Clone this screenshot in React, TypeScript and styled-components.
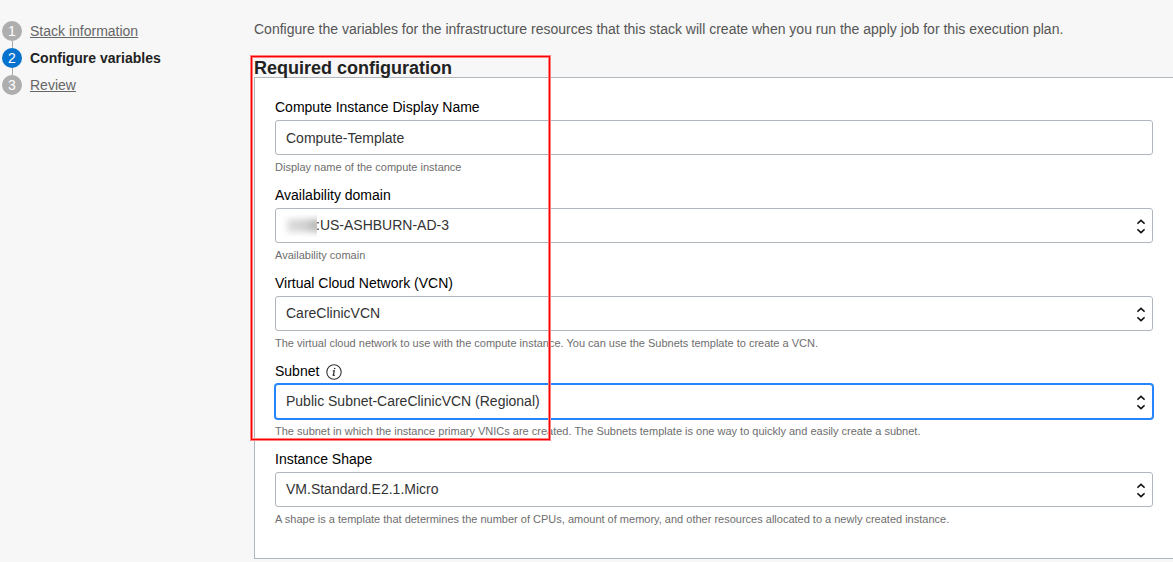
import React from "react";
import styled, { createGlobalStyle, css } from "styled-components";

const GlobalStyle = createGlobalStyle`
  *, *::before, *::after { box-sizing: border-box; }
  body {
    margin: 0;
    min-height: 100vh;
    background: #f7f7f7;
    color: #222;
    font-family: "Liberation Sans", Arial, sans-serif;
    font-size: 14px;
    line-height: 20px;
  }
`;

const Page = styled.div`
  display: flex;
  align-items: flex-start;
  min-height: 100vh;
  overflow: hidden;
`;

const Sidebar = styled.nav`
  flex: 0 0 254px;
  padding: 21px 0 0 2px;
`;

const StepList = styled.ol`
  display: flex;
  flex-direction: column;
  gap: 7px;
  margin: 0;
  padding: 0;
  list-style: none;
`;

const Step = styled.li`
  position: relative;
  display: flex;
  align-items: center;
  gap: 8px;
  height: 20px;

  &:not(:last-child)::after {
    content: "";
    position: absolute;
    left: 10px;
    top: 20px;
    width: 1px;
    height: 7px;
    background: #aaa;
  }
`;

const StepNumber = styled.span<{ $current?: boolean }>`
  width: 20px;
  height: 20px;
  border-radius: 50%;
  background: ${(p) => (p.$current ? "#0572ce" : "#aeaeae")};
  color: #fff;
  text-align: center;
`;

const StepLink = styled.a`
  color: #666;
  text-decoration: underline;
`;

const StepCurrent = styled.strong`
  color: #222;
`;

const Main = styled.main`
  flex: 1;
  min-width: 0;
  padding-top: 19px;
`;

const Intro = styled.p`
  margin: 0 0 19px;
  color: #555;
`;

const Section = styled.section`
  position: relative;
`;

const SectionTitle = styled.h2`
  margin: 0;
  height: 19px;
  font-size: 18px;
  line-height: 20px;
`;

const Panel = styled.div`
  padding: 16px 20px 24px;
  border: 1px solid #b0b6be;
  border-right: 0;
  background: #fff;
`;

const Field = styled.div`
  display: flex;
  flex-direction: column;
  padding-bottom: 3px;
`;

const LabelRow = styled.div`
  display: flex;
  align-items: center;
  gap: 7px;
  height: 26px;
  color: #000;
`;

const InfoButton = styled.button`
  display: flex;
  padding: 0;
  border: 0;
  background: none;
  color: #333;
`;

const Control = styled.div`
  position: relative;
  display: flex;
`;

const box = css<{ $focused?: boolean }>`
  flex: 1;
  min-width: 0;
  height: 35px;
  border: 1px solid ${(p) => (p.$focused ? "#2684ff" : "#b0b6be")};
  border-radius: 3px;
  box-shadow: ${(p) => (p.$focused ? "0 0 0 1px #2684ff" : "none")};
  outline: none;
  background: #fff;
  color: #333;
  font: inherit;
`;

const TextInput = styled.input`
  ${box}
  padding: 0 10px;
`;

const Select = styled.select<{ $focused?: boolean; $redacted?: boolean }>`
  ${box}
  appearance: none;
  padding: 0 24px 2px ${(p) => (p.$redacted ? "40px" : "10px")};
`;

const Redaction = styled.span`
  position: absolute;
  left: 6px;
  top: 6px;
  width: 36px;
  height: 23px;
  overflow: hidden;
  pointer-events: none;

  &::before {
    content: "";
    position: absolute;
    inset: 5px -4px 5px 6px;
    background: linear-gradient(90deg, #ddd, #d2d2d2 50%, #b0b0b0);
    filter: blur(3px);
  }
`;

const Chevrons = styled.svg`
  position: absolute;
  right: 8px;
  top: 10px;
  pointer-events: none;
`;

const Hint = styled.span`
  color: #6e6e6e;
  font-size: 11px;
  line-height: 24px;
  white-space: nowrap;
`;

const Highlight = styled.div`
  position: absolute;
  left: -4px;
  top: -3px;
  width: 301px;
  height: 386px;
  border: 1px solid #ff8080;
  outline: 1px solid #ff8080;
  outline-offset: -3px;
  box-shadow: inset 0 0 0 1px #f00;
  pointer-events: none;
`;

type FieldData = {
  id: string;
  label: string;
  value: string;
  hint: string;
  kind?: "text";
  info?: boolean;
  focused?: boolean;
  redacted?: boolean;
};

const fields: FieldData[] = [
  {
    id: "name",
    label: "Compute Instance Display Name",
    value: "Compute-Template",
    hint: "Display name of the compute instance",
    kind: "text",
  },
  {
    id: "domain",
    label: "Availability domain",
    value: ":US-ASHBURN-AD-3",
    hint: "Availability comain",
    redacted: true,
  },
  {
    id: "vcn",
    label: "Virtual Cloud Network (VCN)",
    value: "CareClinicVCN",
    hint: "The virtual cloud network to use with the compute instance. You can use the Subnets template to create a VCN.",
  },
  {
    id: "subnet",
    label: "Subnet",
    value: "Public Subnet-CareClinicVCN (Regional)",
    hint: "The subnet in which the instance primary VNICs are created. The Subnets template is one way to quickly and easily create a subnet.",
    info: true,
    focused: true,
  },
  {
    id: "shape",
    label: "Instance Shape",
    value: "VM.Standard.E2.1.Micro",
    hint: "A shape is a template that determines the number of CPUs, amount of memory, and other resources allocated to a newly created instance.",
  },
];

function InfoIcon() {
  return (
    <svg width="16" height="18" viewBox="0 -2 16 18" fill="none" stroke="currentColor">
      <circle cx="8" cy="8" r="7.2" strokeWidth="1.1" />
      <path d="M6.8 6.8h1.6l-1.2 4.4q0 .6 1.6-.3" strokeWidth="1.2" />
      <circle cx="8.7" cy="4.5" r=".8" fill="currentColor" stroke="none" />
    </svg>
  );
}

function FormField({ field }: { field: FieldData }) {
  const hintId = `${field.id}-hint`;
  return (
    <Field>
      <LabelRow>
        <label htmlFor={field.id}>{field.label}</label>
        {field.info && (
          <InfoButton type="button" aria-label={`About ${field.label}`}>
            <InfoIcon />
          </InfoButton>
        )}
      </LabelRow>
      <Control>
        {field.kind === "text" ? (
          <TextInput id={field.id} type="text" defaultValue={field.value} aria-describedby={hintId} />
        ) : (
          <>
            <Select
              id={field.id}
              aria-describedby={hintId}
              $focused={field.focused}
              $redacted={field.redacted}
            >
              <option>{field.value}</option>
            </Select>
            {field.redacted && <Redaction />}
            <Chevrons width="8" height="18" viewBox="0 0 8 18" fill="none" stroke="#111" strokeWidth="1.6">
              <path d="M.4 5.6 4 2.4l3.6 3.2M.4 11.4 4 14.6l3.6-3.2" />
            </Chevrons>
          </>
        )}
      </Control>
      <Hint id={hintId}>{field.hint}</Hint>
    </Field>
  );
}

export default function App() {
  return (
    <>
      <GlobalStyle />
      <Page>
        <Sidebar aria-label="Steps">
          <StepList>
            <Step>
              <StepNumber>1</StepNumber>
              <StepLink href="#stack">Stack information</StepLink>
            </Step>
            <Step aria-current="step">
              <StepNumber $current>2</StepNumber>
              <StepCurrent>Configure variables</StepCurrent>
            </Step>
            <Step>
              <StepNumber>3</StepNumber>
              <StepLink href="#review">Review</StepLink>
            </Step>
          </StepList>
        </Sidebar>
        <Main>
          <Intro>
            Configure the variables for the infrastructure resources that this stack will create when you run the
            apply job for this execution plan.
          </Intro>
          <Section>
            <SectionTitle>Required configuration</SectionTitle>
            <Panel>
              {fields.map((field) => (
                <FormField key={field.id} field={field} />
              ))}
            </Panel>
            <Highlight />
          </Section>
        </Main>
      </Page>
    </>
  );
}
